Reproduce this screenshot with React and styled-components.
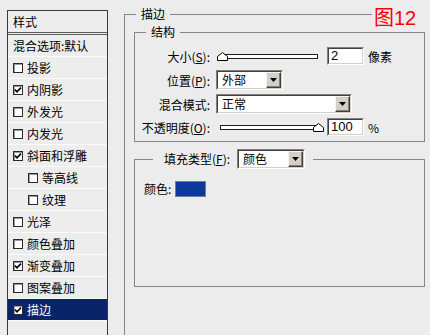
import React from "react";
import styled, { createGlobalStyle } from "styled-components";

const GlobalStyle = createGlobalStyle`
  html, body { margin: 0; padding: 0; background: #ececec; }
  body {
    font-family: "Noto Sans CJK SC", "Liberation Sans", sans-serif;
    font-size: 12px;
    color: #000;
  }
`;

const Page = styled.div`
  position: relative;
  width: 430px;
  height: 335px;
  overflow: hidden;
  display: flex;
  align-items: flex-start;
  background: #ececec;
`;

/* ---------- left style list ---------- */
const StyleList = styled.div`
  flex: none;
  margin: 10px 0 0 7px;
  width: 101px;
  height: 340px;
  box-sizing: border-box;
  border: 1px solid #3a3a3a;
  background: #ededed;
`;

const ListHeader = styled.div`
  height: 21px;
  line-height: 21px;
  padding-left: 5px;
  border-bottom: 3px double #5a5a5a;
`;

const ListRow = styled.div`
  height: 21px;
  display: flex;
  align-items: center;
  gap: 4px;
  padding-left: ${(p) => (p.$indent ? 20 : 5)}px;
  border-bottom: 1px solid #fbfbfb;
  background: ${(p) => (p.$selected ? "#0a246a" : "transparent")};
  color: ${(p) => (p.$selected ? "#fff" : "#000")};
  white-space: nowrap;
`;

const Box = styled.span`
  flex: none;
  width: 10px;
  height: 10px;
  box-sizing: border-box;
  border: 1px solid #2a2a2a;
  box-shadow: inset 1px 1px 0 #9a9a9a;
  background: #fff;
  display: flex;
  align-items: center;
  justify-content: center;
`;

const Check = ({ on }) => (
  <Box>
    {on && (
      <svg width="8" height="8" viewBox="0 0 8 8">
        <path d="M1 3.6 L3 5.8 L7 1.6" fill="none" stroke="#000" strokeWidth="1.6" />
      </svg>
    )}
  </Box>
);

/* ---------- right groups ---------- */
const OuterGroup = styled.fieldset`
  flex: none;
  margin: 6px 0 0 16px;
  padding: 2px 9px 0 9px;
  border: 1px solid #858585;
  width: 291px;
  min-height: 340px;
`;

const Legend = styled.legend`
  margin-left: ${(p) => p.$ml}px;
  padding: 0 ${(p) => p.$pr}px 0 ${(p) => p.$pl}px;
  line-height: 16px;
`;

const Group = styled.fieldset`
  margin: ${(p) => p.$mt}px 0 0 0;
  padding: ${(p) => p.$pad};
  border: 1px solid #858585;
  box-sizing: border-box;
  width: 291px;
`;

const FormGrid = styled.div`
  display: grid;
  grid-template-columns: 75px auto;
  grid-template-rows: 20px 20px 20px 18px;
  column-gap: 6px;
  row-gap: 4px;
  align-items: center;
`;

const Label = styled.span`
  text-align: right;
  white-space: nowrap;
`;

const Controls = styled.div`
  display: flex;
  align-items: center;
`;

const SliderWrap = styled.div`
  position: relative;
  width: 108px;
  height: 18px;
  display: flex;
  align-items: center;
`;

const Track = styled.div`
  margin-left: 4px;
  width: 98px;
  height: 5px;
  box-sizing: border-box;
  border: 1px solid #1e1e1e;
  background: #fff;
`;

const Thumb = styled.svg`
  position: absolute;
  top: 5px;
`;

const Sunken = styled.div`
  box-sizing: border-box;
  border: 1px solid;
  border-color: #808080 #ffffff #ffffff #808080;
  background: #fff;
  display: flex;
`;

const SunkenInner = styled.div`
  flex: 1;
  display: flex;
  align-items: stretch;
  border: 1px solid;
  border-color: #404040 #d4d0c8 #d4d0c8 #404040;
`;

const NumInput = styled(Sunken)`
  margin-left: 3px;
  width: 37px;
  height: 18px;
`;

const NumText = styled.span`
  padding-left: 2px;
  line-height: 14px;
  font-family: "Liberation Sans", sans-serif;
  font-size: 13px;
`;

const Unit = styled.span`
  margin-left: 4px;
  white-space: nowrap;
`;

const SelectBox = styled(Sunken)`
  width: ${(p) => p.$w}px;
  height: 20px;
`;

const SelectText = styled.span`
  flex: 1;
  padding-left: 4px;
  line-height: 16px;
`;

const SelectBtn = styled.span`
  flex: none;
  width: 15px;
  box-sizing: border-box;
  background: #d4d0c8;
  border: 1px solid;
  border-color: #f4f4f4 #404040 #404040 #f4f4f4;
  box-shadow: inset -1px -1px 0 #808080;
  display: flex;
  align-items: center;
  justify-content: center;
`;

const Select = ({ w, value }) => (
  <SelectBox $w={w}>
    <SunkenInner>
      <SelectText>{value}</SelectText>
      <SelectBtn>
        <svg width="7" height="4" viewBox="0 0 7 4">
          <polygon points="0,0 7,0 3.5,4" fill="#000" />
        </svg>
      </SelectBtn>
    </SunkenInner>
  </SelectBox>
);

const LegendRow = styled.span`
  display: inline-flex;
  align-items: center;
  gap: 7px;
  vertical-align: top;
  height: 20px;
`;

const FillBody = styled.div`
  height: 105px;
  display: flex;
  align-items: flex-start;
  gap: 4px;
`;

const FillLabel = styled.span`
  line-height: 16px;
`;

const Swatch = styled.span`
  width: 31px;
  height: 16px;
  box-sizing: border-box;
  border: 1px solid #6f7f9e;
  background: ${(p) => p.$c};
`;

const Stamp = styled.div`
  position: absolute;
  top: 7px;
  left: 372px;
  width: 58px;
  box-sizing: border-box;
  padding-left: 2px;
  white-space: nowrap;
  font-family: "Liberation Sans", "Noto Sans CJK SC", sans-serif;
  font-size: 20px;
  line-height: 22px;
  color: #ff0000;
  background: #ececec;
`;

const ThumbIcon = ({ left }) => (
  <Thumb width="11" height="9" viewBox="0 0 11 9" style={{ left }}>
    <path d="M0.5 8.5 V4.5 L5.5 0.5 L10.5 4.5 V8.5 Z" fill="#fff" stroke="#000" strokeWidth="1" />
  </Thumb>
);

const items = [
  { t: "投影" },
  { t: "内阴影", on: true },
  { t: "外发光" },
  { t: "内发光" },
  { t: "斜面和浮雕", on: true },
  { t: "等高线", indent: true },
  { t: "纹理", indent: true },
  { t: "光泽" },
  { t: "颜色叠加" },
  { t: "渐变叠加", on: true },
  { t: "图案叠加" },
  { t: "描边", on: true, sel: true },
];

export default function App() {
  return (
    <>
      <GlobalStyle />
      <Page>
        <StyleList>
          <ListHeader>样式</ListHeader>
          <ListRow>混合选项:默认</ListRow>
          {items.map((it) => (
            <ListRow key={it.t} $indent={it.indent} $selected={it.sel}>
              <Check on={it.on} />
              {it.t}
            </ListRow>
          ))}
        </StyleList>

        <OuterGroup>
          <Legend $ml={2} $pl={5} $pr={5}>描边</Legend>

          <Group $mt={0} $pad="6px 0 5px 0">
            <Legend $ml={11} $pl={5} $pr={5}>结构</Legend>
            <FormGrid>
              <Label>大小(<u>S</u>):</Label>
              <Controls>
                <SliderWrap>
                  <Track />
                  <ThumbIcon left={1} />
                </SliderWrap>
                <NumInput>
                  <SunkenInner>
                    <NumText>2</NumText>
                  </SunkenInner>
                </NumInput>
                <Unit>像素</Unit>
              </Controls>

              <Label>位置(<u>P</u>):</Label>
              <Controls>
                <Select w={67} value="外部" />
              </Controls>

              <Label>混合模式:</Label>
              <Controls>
                <Select w={136} value="正常" />
              </Controls>

              <Label>不透明度(<u>O</u>):</Label>
              <Controls>
                <SliderWrap>
                  <Track />
                  <ThumbIcon left={97} />
                </SliderWrap>
                <NumInput>
                  <SunkenInner>
                    <NumText>100</NumText>
                  </SunkenInner>
                </NumInput>
                <Unit>%</Unit>
              </Controls>
            </FormGrid>
          </Group>

          <Group $mt={7} $pad="12px 0 0 9px">
            <Legend $ml={9} $pl={11} $pr={8}>
              <LegendRow>
                <span>填充类型(<u>F</u>):</span>
                <Select w={68} value="颜色" />
              </LegendRow>
            </Legend>
            <FillBody>
              <FillLabel>颜色:</FillLabel>
              <Swatch $c="#0c389c" />
            </FillBody>
          </Group>
        </OuterGroup>

        <Stamp>图12</Stamp>
      </Page>
    </>
  );
}
